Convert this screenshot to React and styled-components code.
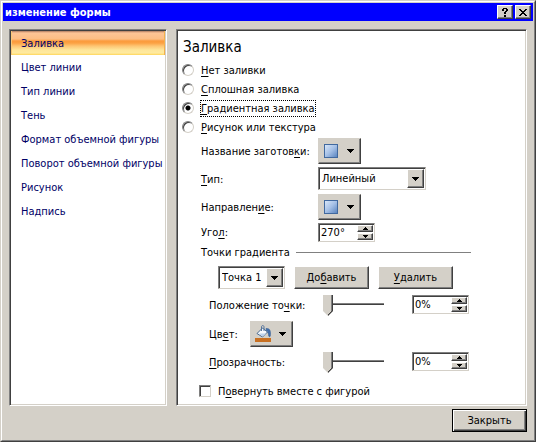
import React, { useState } from "react";
import styled, { createGlobalStyle, css } from "styled-components";

const face = "#d4d0c8";
const shadow = "#808080";
const dark = "#404040";
const ui = `"DejaVu Sans Condensed", "DejaVu Sans", sans-serif`;

const GlobalStyle = createGlobalStyle`
  *, *::before, *::after { box-sizing: border-box; }
  body { margin: 0; background: ${face}; }
  body, button, input, select { font-family: ${ui}; font-stretch: condensed; font-size: 11px; line-height: 15px; color: #000; }
  u { text-underline-offset: 2px; text-decoration-thickness: 1px; text-decoration-skip-ink: none; }
`;

const raised = css`
  border: 1px solid;
  border-color: #fff ${dark} ${dark} #fff;
  box-shadow: inset -1px -1px 0 ${shadow};
`;

const sunken = css`
  border: 1px solid;
  border-color: ${shadow} ${face} ${face} ${shadow};
  box-shadow: inset 1px 1px 0 ${dark};
`;

const Frame = styled.div`
  min-height: 100vh;
  display: flex;
  border: 1px solid;
  border-color: ${face} ${dark} ${dark} ${face};
`;

const Dialog = styled.main`
  flex: 1;
  min-width: 0;
  display: flex;
  flex-direction: column;
  padding: 1px;
  background: ${face};
  border: 1px solid;
  border-color: #fff ${shadow} ${shadow} #fff;
`;

const TitleBar = styled.header`
  display: flex;
  align-items: center;
  gap: 2px;
  height: 18px;
  padding: 0 2px;
  background: #0000ff;
`;

const Title = styled.h1`
  flex: 1;
  margin: 0;
  font-size: 11px;
  line-height: 15px;
  font-weight: bold;
  color: #fff;
`;

const CaptionButton = styled.button`
  ${raised}
  width: 16px;
  height: 14px;
  padding: 0;
  background: ${face};
  display: grid;
  place-items: center;
`;

const Body = styled.div`
  flex: 1;
  display: grid;
  grid-template-columns: 158px 1fr;
  gap: 9px;
  padding: 8px 6px 0;
`;

const Panel = styled.div`
  background: #fff;
  border: 1px solid;
  border-color: ${shadow} #fff #fff ${shadow};
  box-shadow: inset 1px 1px 0 ${dark}, inset -1px -1px 0 ${face};
  padding: 1px;
`;

const Categories = styled(Panel).attrs({ as: "nav" })`
  display: flex;
  flex-direction: column;
`;

const Category = styled.button`
  height: 24px;
  padding: 1px 0 0 10px;
  border: 0;
  text-align: left;
  white-space: nowrap;
  color: #000066;
  background: ${(p) =>
    p.$active
      ? "linear-gradient(#a87c62 0, #dba07a 1px, #fdc596 2px, #fdbe84 8px, #fb9b3c 10px, #fca143 12px, #fdc573 15px, #fee69a 19px, #ffeaa0 22px, #ffd558 24px)"
      : "transparent"};
  box-shadow: ${(p) => (p.$active ? "inset -1px 0 0 #f3b04c, inset 1px 0 0 #f9c878" : "none")};
`;

const Settings = styled(Panel).attrs({ as: "section" })`
  padding: 1px 55px 1px 5px;
`;

const Heading = styled.h2`
  margin: 0;
  padding: 4px 0 2px 1px;
  font-size: 15px;
  line-height: 24px;
  font-weight: normal;
`;

const RadioRow = styled.label`
  display: flex;
  align-items: center;
  gap: 6px;
  height: 19px;
`;

const Radio = styled.input`
  appearance: none;
  width: 12px;
  height: 12px;
  margin: 0 0 2px;
  border-radius: 50%;
  border: 1px solid;
  border-color: ${shadow} ${face} ${face} ${shadow};
  box-shadow: inset 1px 1px 0 ${dark};
  background: #fff;
  outline: none;
  &:checked {
    background: radial-gradient(circle, #000 0 2px, #fff 3px);
  }
`;

const OptionText = styled.span`
  line-height: 15px;
  border: 1px ${(p) => (p.$focused ? "dotted #000" : "solid transparent")};
`;

const FieldGrid = styled.div`
  display: grid;
  grid-template-columns: 117px 1fr;
  grid-template-rows: 26px 24px 26px 19px;
  gap: 3px 0;
  padding: 1px 0 0 19px;
`;

const FieldLabel = styled.label`
  align-self: center;
  white-space: nowrap;
`;

const MenuButton = styled.button`
  ${raised}
  border-color: ${face} ${dark} ${dark} ${face};
  display: flex;
  align-items: center;
  gap: 8px;
  width: 43px;
  height: 26px;
  padding: 0 0 1px 4px;
  background: ${face};
`;

const SelectBox = styled.span`
  ${sunken}
  display: flex;
  width: ${(p) => (p.$wide ? "108px" : "67px")};
  height: 23px;
  padding: 1px;
  background: #fff;
  position: relative;
`;

const NativeSelect = styled.select`
  appearance: none;
  flex: 1;
  min-width: 0;
  padding: 0 18px 0 2px;
  border: 0;
  background: transparent;
  outline: none;
`;

const DropMark = styled.span`
  ${raised}
  position: absolute;
  top: 1px;
  right: 1px;
  bottom: 1px;
  width: 17px;
  display: grid;
  place-items: center;
  background: ${face};
  pointer-events: none;
`;

const SpinBox = styled.span`
  ${sunken}
  display: grid;
  grid-template-columns: 1fr 16px;
  width: 57px;
  height: 19px;
  padding: 1px;
  background: #fff;
`;

const SpinInput = styled.input`
  min-width: 0;
  width: 100%;
  padding: 0 1px;
  border: 0;
  outline: none;
  background: transparent;
`;

const SpinButtons = styled.span`
  display: grid;
  grid-template-rows: 7px 7px;
  gap: 1px;
`;

const SpinButton = styled.button`
  ${raised}
  padding: 0;
  background: ${face};
  display: grid;
  place-items: center;
`;

const GroupTitle = styled.h3`
  display: flex;
  align-items: center;
  gap: 6px;
  height: 19px;
  margin: 1px 0 4px;
  padding-left: 19px;
  font-size: 11px;
  font-weight: normal;
  line-height: 15px;
  &::after {
    content: "";
    flex: 1;
    height: 1px;
    background: ${shadow};
  }
`;

const StopRow = styled.div`
  display: flex;
  gap: 9px;
  padding-left: 36px;
`;

const PushButton = styled.button`
  ${raised}
  min-width: 75px;
  height: 23px;
  padding: 0 8px;
  background: ${face};
  white-space: nowrap;
`;

const StopFields = styled.div`
  display: flex;
  flex-direction: column;
  gap: 5px;
  padding: 6px 0 0 27px;
`;

const SliderRow = styled.div`
  display: grid;
  grid-template-columns: 114px 61px 57px;
  align-items: start;
  height: 21px;
  & > ${FieldLabel} { align-self: center; }
  & > ${SpinBox} { margin-left: 28px; }
`;

const Slider = styled.input`
  appearance: none;
  width: 100%;
  height: 21px;
  margin: 0;
  outline: none;
  background: linear-gradient(${shadow} 1px, ${dark} 1px) 0 8px / 100% 2px no-repeat;
  &::-webkit-slider-runnable-track {
    height: 21px;
  }
  &::-webkit-slider-thumb {
    appearance: none;
    width: 10px;
    height: 21px;
    clip-path: polygon(0 0, 100% 0, 100% 76%, 50% 100%, 0 76%);
    background:
      linear-gradient(${dark}, ${dark}) 100% 0 / 1px 16px no-repeat,
      linear-gradient(${shadow}, ${shadow}) 8px 0 / 1px 16px no-repeat,
      linear-gradient(135deg, ${face} 35%, ${dark} 40%) 100% 100% / 5px 5px no-repeat,
      ${face};
  }
`;

const ColorRow = styled.div`
  display: grid;
  grid-template-columns: 41px 1fr;
`;

const CheckRow = styled.label`
  display: flex;
  align-items: center;
  gap: 7px;
  height: 16px;
  margin: 10px 0 0 17px;
`;

const CheckBox = styled.input`
  ${sunken}
  appearance: none;
  width: 12px;
  height: 12px;
  margin: 0;
  background: #fff;
`;

const Footer = styled.footer`
  display: flex;
  justify-content: flex-end;
  padding: 3px 6px 7px;
`;

const DefaultButton = styled(PushButton)`
  border-color: #000;
  box-shadow: inset 1px 1px 0 #fff, inset -1px -1px 0 ${dark}, inset -2px -2px 0 ${shadow};
`;

const DownArrow = () => (
  <svg width="7" height="4" shapeRendering="crispEdges" aria-hidden="true">
    <path d="M0 0h7v1H0zM1 1h5v1H1zM2 2h3v1H2zM3 3h1v1H3z" />
  </svg>
);

const SmallArrow = ({ up }) => (
  <svg width="5" height="3" shapeRendering="crispEdges" aria-hidden="true">
    <path d={up ? "M2 0h1v1H2zM1 1h3v1H1zM0 2h5v1H0z" : "M0 0h5v1H0zM1 1h3v1H1zM2 2h1v1H2z"} />
  </svg>
);

const GradientSwatch = ({ id }) => (
  <svg width="16" height="16" aria-hidden="true">
    <defs>
      <linearGradient id={id} x1="0" y1="0" x2="1" y2="1">
        <stop offset="0" stopColor="#dce9fa" />
        <stop offset=".5" stopColor="#a5c0e6" />
        <stop offset="1" stopColor="#5480bd" />
      </linearGradient>
    </defs>
    <rect x="1.5" y="1.5" width="13" height="13" fill={`url(#${id})`} stroke="#41699f" />
  </svg>
);

const BucketIcon = () => (
  <svg width="16" height="17" aria-hidden="true">
    <path d="M11 3.500c4-.5 5 2.500 4.300 7.500-.2 1-1.300 1-1.600 0-.2-2.500-.7-4-2.200-5z" fill="#426fae" stroke="#2b568f" strokeWidth=".5" />
    <path d="M7.500 3 12.500 7 7.500 12 2 8.500z" fill="#f6f9fd" stroke="#47688f" />
    <path d="M4 8.500h7.500l-4 3z" fill="#bcd2ec" />
    <path d="M6.500 6V2c0-2 2.500-2 2.500 0v4" fill="none" stroke="#55749c" />
    <rect x="0" y="13" width="16" height="4" fill="#c87022" />
  </svg>
);

const Spin = ({ id, value, label }) => {
  const [text, setText] = useState(value);
  const step = (d) => setText((t) => t.replace(/-?\d+/, (n) => String(Number(n) + d)));
  return (
    <SpinBox>
      <SpinInput id={id} aria-label={label} value={text} onChange={(e) => setText(e.target.value)} />
      <SpinButtons>
        <SpinButton type="button" aria-label="Больше" onClick={() => step(1)}><SmallArrow up /></SpinButton>
        <SpinButton type="button" aria-label="Меньше" onClick={() => step(-1)}><SmallArrow /></SpinButton>
      </SpinButtons>
    </SpinBox>
  );
};

const Select = ({ id, label, wide, children }) => (
  <SelectBox $wide={wide}>
    <NativeSelect id={id} aria-label={label}>{children}</NativeSelect>
    <DropMark><DownArrow /></DropMark>
  </SelectBox>
);

const categories = ["Заливка", "Цвет линии", "Тип линии", "Тень", "Формат объемной фигуры", "Поворот объемной фигуры", "Рисунок", "Надпись"];
const fills = [["Н", "ет заливки"], ["С", "плошная заливка"], ["Г", "радиентная заливка"], ["Р", "исунок или текстура"]];

export default function App() {
  const [category, setCategory] = useState(0);
  const [fill, setFill] = useState(2);
  return (
    <>
      <GlobalStyle />
      <Frame>
        <Dialog>
          <TitleBar>
            <Title>изменение формы</Title>
            <CaptionButton type="button" aria-label="Справка">
              <svg width="8" height="9" shapeRendering="crispEdges" aria-hidden="true">
                <path d="M2 0h4v1H2zM1 1h2v2H1zM5 1h2v2H5zM4 3h2v1H4zM3 4h2v2H3zM3 7h2v2H3z" />
              </svg>
            </CaptionButton>
            <CaptionButton type="button" aria-label="Закрыть окно">
              <svg width="8" height="7" shapeRendering="crispEdges" aria-hidden="true">
                <path d="M0 0h2v1H0zM6 0h2v1H6zM1 1h2v1H1zM5 1h2v1H5zM2 2h4v1H2zM3 3h2v1H3zM2 4h4v1H2zM1 5h2v1H1zM5 5h2v1H5zM0 6h2v1H0zM6 6h2v1H6z" />
              </svg>
            </CaptionButton>
          </TitleBar>
          <Body>
            <Categories>
              {categories.map((name, i) => (
                <Category key={name} type="button" $active={i === category} onClick={() => setCategory(i)}>{name}</Category>
              ))}
            </Categories>
            <Settings>
              <Heading>Заливка</Heading>
              {fills.map(([key, rest], i) => (
                <RadioRow key={key}>
                  <Radio type="radio" name="fill" checked={fill === i} onChange={() => setFill(i)} />
                  <OptionText $focused={fill === i}><u>{key}</u>{rest}</OptionText>
                </RadioRow>
              ))}
              <FieldGrid>
                <FieldLabel htmlFor="preset">Название заготов<u>к</u>и:</FieldLabel>
                <MenuButton id="preset" type="button"><GradientSwatch id="preset-fill" /><DownArrow /></MenuButton>
                <FieldLabel htmlFor="kind"><u>Т</u>ип:</FieldLabel>
                <Select id="kind" wide><option>Линейный</option></Select>
                <FieldLabel htmlFor="direction">Направлен<u>и</u>е:</FieldLabel>
                <MenuButton id="direction" type="button"><GradientSwatch id="direction-fill" /><DownArrow /></MenuButton>
                <FieldLabel htmlFor="angle">Уго<u>л</u>:</FieldLabel>
                <Spin id="angle" value="270°" />
              </FieldGrid>
              <GroupTitle>Точки градиента</GroupTitle>
              <StopRow>
                <Select label="Точка градиента"><option>Точка 1</option></Select>
                <PushButton type="button">До<u>б</u>авить</PushButton>
                <PushButton type="button"><u>У</u>далить</PushButton>
              </StopRow>
              <StopFields>
                <SliderRow>
                  <FieldLabel htmlFor="position">Положение то<u>ч</u>ки:</FieldLabel>
                  <Slider id="position" type="range" defaultValue="0" />
                  <Spin label="Положение точки" value="0%" />
                </SliderRow>
                <ColorRow>
                  <FieldLabel htmlFor="color">Цв<u>е</u>т:</FieldLabel>
                  <MenuButton id="color" type="button"><BucketIcon /><DownArrow /></MenuButton>
                </ColorRow>
                <SliderRow>
                  <FieldLabel htmlFor="opacity"><u>П</u>розрачность:</FieldLabel>
                  <Slider id="opacity" type="range" defaultValue="0" />
                  <Spin label="Прозрачность" value="0%" />
                </SliderRow>
              </StopFields>
              <CheckRow>
                <CheckBox type="checkbox" />
                <span>П<u>о</u>вернуть вместе с фигурой</span>
              </CheckRow>
            </Settings>
          </Body>
          <Footer><DefaultButton type="button">Закрыть</DefaultButton></Footer>
        </Dialog>
      </Frame>
    </>
  );
}
